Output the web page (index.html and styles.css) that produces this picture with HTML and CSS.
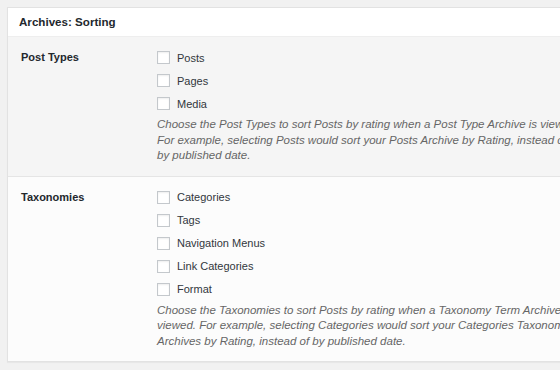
FILE: index.html
```html
<!DOCTYPE html>
<html>
<head>
<meta charset="utf-8">
<link rel="stylesheet" href="styles.css">
</head>
<body>
<div class="card">
  <h2 class="card-title">Archives: Sorting</h2>
  <div class="row row-alt">
    <div class="row-label">Post Types</div>
    <div class="row-field">
      <label class="check"><input type="checkbox"><span>Posts</span></label>
      <label class="check"><input type="checkbox"><span>Pages</span></label>
      <label class="check"><input type="checkbox"><span>Media</span></label>
      <p class="desc">Choose the Post Types to sort Posts by rating when a Post Type Archive is viewed.<br>For example, selecting Posts would sort your Posts Archive by Rating, instead of<br>by published date.</p>
    </div>
  </div>
  <div class="row">
    <div class="row-label">Taxonomies</div>
    <div class="row-field">
      <label class="check"><input type="checkbox"><span>Categories</span></label>
      <label class="check"><input type="checkbox"><span>Tags</span></label>
      <label class="check"><input type="checkbox"><span>Navigation Menus</span></label>
      <label class="check"><input type="checkbox"><span>Link Categories</span></label>
      <label class="check"><input type="checkbox"><span>Format</span></label>
      <p class="desc">Choose the Taxonomies to sort Posts by rating when a Taxonomy Term Archive is<br>viewed. For example, selecting Categories would sort your Categories Taxonomy<br>Archives by Rating, instead of by published date.</p>
    </div>
  </div>
</div>
</body>
</html>
```

FILE: styles.css
```css
html, body {
  margin: 0;
  padding: 0;
  background: #f1f1f1;
  overflow: hidden;
  width: 560px;
  height: 370px;
}

body {
  font-family: "Liberation Sans", Arial, sans-serif;
  font-size: 11px;
  color: #32373c;
}

.card {
  margin: 7px 0 0 7px;
  width: 640px;
  background: #fcfcfc;
  border: 1px solid #e2e2e2;
  box-shadow: 0 1px 1px rgba(0, 0, 0, 0.04);
}

.card-title {
  margin: 0;
  height: 29px;
  line-height: 28px;
  padding-left: 11px;
  background: #fff;
  border-bottom: 1px solid #eeeeee;
  font-size: 11.6px;
  font-weight: bold;
  color: #23282d;
  box-sizing: border-box;
}

.row {
  display: flex;
  padding: 9px 0 12px 13px;
}

.row-alt {
  background: #f5f5f5;
  border-bottom: 1px solid #e5e5e5;
}

.row-label {
  width: 136px;
  flex: none;
  font-weight: bold;
  color: #23282d;
  line-height: 22px;
}

.row-field {
  flex: 1;
}

.check {
  display: flex;
  align-items: center;
  height: 23px;
  color: #32373c;
}

.check input {
  appearance: none;
  -webkit-appearance: none;
  margin: 0 7px 0 0;
  width: 13px;
  height: 13px;
  background: #fff;
  border: 1px solid #c4c8cc;
  box-shadow: inset 0 1px 2px rgba(0, 0, 0, 0.07);
  box-sizing: border-box;
}

.desc {
  margin: 2px 0 0 0;
  font-size: 11.5px;
  font-style: italic;
  color: #666;
  line-height: 15.5px;
  white-space: nowrap;
}
```
